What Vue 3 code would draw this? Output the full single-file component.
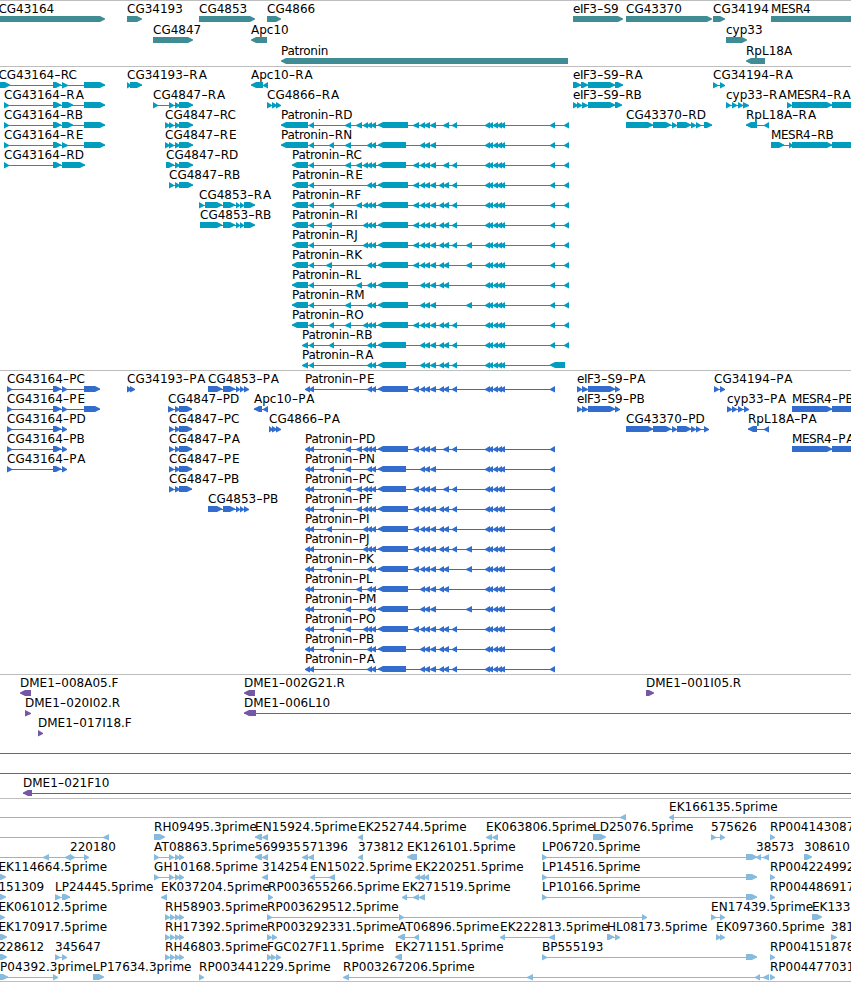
<script setup>
const WIDTH = 851;
const EDGE = 860;
const HEAD = 5;

// feature: [label, row, direction, exons, line start, line end]
function feature(name, row, dir, exons, from, to) {
  return { name, row, dir, exons, from, to };
}

const genes = [
  feature("CG43164", 0, 1, [[-1, 105]]),
  feature("CG34193", 0, 1, [[127, 142]]),
  feature("CG4853", 0, 1, [[199, 255]]),
  feature("CG4866", 0, 1, [[267, 281]]),
  feature("eIF3-S9", 0, 1, [[573, 623]]),
  feature("CG43370", 0, 1, [[626, 712]]),
  feature("CG34194", 0, 1, [[713, 725]]),
  feature("MESR4", 0, 1, [[771, EDGE]]),
  feature("CG4847", 1, 1, [[153, 193]]),
  feature("Apc10", 1, -1, [[251, 267]]),
  feature("cyp33", 1, 1, [[726, 747]]),
  feature("Patronin", 2, -1, [[281, 568]]),
  feature("RpL18A", 2, -1, [[746, 765]]),
];

// Patronin exons shared between the isoforms
const parts = {
  A: [[309, 314]],
  b: [[329, 334]],
  n: [[326, 332]],
  c: [[345, 351]],
  d: [[356, 362]],
  e: [[367, 372], [371, 376]],
  E: [[363, 368], [367, 372], [371, 376]],
  m: [[378, 406]],
  M: [[378, 408]],
  f: [[413, 419]],
  g: [[420, 425], [424, 430]],
  h: [[430, 436]],
  i: [[443, 449]],
  I: [[439, 444], [443, 449]],
  j: [[452, 457]],
  k: [[466, 472]],
  Q: [[485, 490], [488, 493], [493, 498], [497, 502], [500, 505]],
  y: [[550, 555]],
  z: [[564, 569]],
  Z: [[550, 565]],
};

function exonsOf(keys) {
  return keys.split("").flatMap((key) => parts[key]);
}

// isoform, first exon, exon keys, protein row
const isoforms = [
  ["D", [281, 308], "AcdEMfghijQy", 3],
  ["N", [281, 308], "AbcemghQy", 4],
  ["C", [292, 308], "AcdEmfghijQy", 5],
  ["E", [292, 308], "AeMfghIjQy", 0],
  ["F", [292, 308], "AbdEMfghIjQy", 6],
  ["I", [292, 308], "AnEMfghIjQy", 7],
  ["J", [292, 308], "AEMfghIjkQy", 8],
  ["K", [292, 308], "AneMfghIkQy", 9],
  ["L", [292, 308], "AdeMghIQy", 10],
  ["M", [292, 308], "AceMghkQy", 11],
  ["O", [292, 308], "AbcEMfghIjQy", 12],
  ["B", [302, 308], "AbemghIjQy", 13],
  ["A", [302, 308], "AemghIjQ", 14],
];

const patroninRna = isoforms.map(([id, first, keys], index) =>
  feature(`Patronin-R${id}`, index + 2, -1, [first, ...exonsOf(keys + (id === "A" ? "Z" : "z"))])
);
const patroninProtein = isoforms.map(([id, , keys, row]) =>
  feature(`Patronin-P${id}`, row, -1, [[305, 310], ...exonsOf(id === "A" ? keys + "y" : keys)])
);

const tail4847 = [[175, 180], [179, 193]];
const tail4853 = [[223, 235], [236, 240], [240, 244]];
const mid43370 = [[626, 653], [653, 671], [672, 677], [677, 691], [691, 696], [696, 701]];
const mesr4 = [[792, 832], [832, EDGE]];

const transcripts = [
  feature("CG43164-RC", 0, 1, [[-1, 10], [53, 61], [62, 68], [84, 105]]),
  feature("CG43164-RA", 1, 1, [[4, 9], [53, 61], [62, 73], [84, 105]]),
  feature("CG43164-RB", 2, 1, [[4, 9], [53, 61], [62, 73], [84, 105]]),
  feature("CG43164-RE", 3, 1, [[4, 9], [53, 61], [62, 68], [84, 105]]),
  feature("CG43164-RD", 4, 1, [[4, 9], [53, 61], [62, 85]]),
  feature("CG34193-RA", 0, 1, [[127, 131], [130, 142]]),
  feature("CG4847-RA", 1, 1, [[153, 158], [169, 174], ...tail4847]),
  feature("CG4847-RC", 2, 1, [[165, 170], [169, 174], ...tail4847]),
  feature("CG4847-RE", 3, 1, [[165, 170], [169, 174], ...tail4847]),
  feature("CG4847-RD", 4, 1, [[166, 174], ...tail4847]),
  feature("CG4847-RB", 5, 1, [[169, 174], ...tail4847]),
  feature("CG4853-RA", 6, 1, [[199, 204], [205, 222], ...tail4853, [244, 255]]),
  feature("CG4853-RB", 7, 1, [[200, 222], ...tail4853, [244, 255]]),
  feature("Apc10-RA", 0, -1, [[251, 263], [263, 268]]),
  feature("CG4866-RA", 1, 1, [[267, 272], [272, 277], [276, 281]]),
  ...patroninRna,
  feature("eIF3-S9-RA", 0, 1, [[573, 581], [581, 588], [588, 615], [615, 623]]),
  feature("eIF3-S9-RB", 1, 1, [[573, 578], [577, 582], [582, 588], [588, 615], [615, 622]]),
  feature("CG43370-RD", 2, 1, [...mid43370, [704, 712]]),
  feature("CG34194-RA", 0, 1, [[713, 718], [720, 725]]),
  feature("cyp33-RA", 1, 1, [[726, 731], [732, 737], [738, 743], [743, 749]]),
  feature("RpL18A-RA", 2, -1, [[746, 757], [764, 769]]),
  feature("MESR4-RA", 1, 1, [[787, 792], ...mesr4]),
  feature("MESR4-RB", 3, 1, [[771, 784], [789, 793], ...mesr4]),
];

const proteins = [
  feature("CG43164-PC", 0, 1, [[7, 12], [53, 61], [62, 67], [84, 100]]),
  feature("CG43164-PE", 1, 1, [[7, 12], [53, 61], [62, 67], [84, 100]]),
  feature("CG43164-PD", 2, 1, [[7, 12], [53, 61], [62, 67]]),
  feature("CG43164-PB", 3, 1, [[7, 12], [53, 61], [62, 67]]),
  feature("CG43164-PA", 4, 1, [[7, 12], [53, 61], [62, 67]]),
  feature("CG34193-PA", 0, 1, [[127, 132], [130, 135]]),
  feature("CG4853-PA", 0, 1, [[208, 222], ...tail4853, [244, 249]]),
  feature("CG4847-PD", 1, 1, [[168, 174], [175, 180], [179, 192]]),
  feature("CG4847-PC", 2, 1, [[169, 174], [175, 180], [179, 192]]),
  feature("CG4847-PA", 3, 1, [[169, 174], [175, 180], [179, 192]]),
  feature("CG4847-PE", 4, 1, [[169, 174], [175, 180], [179, 192]]),
  feature("CG4847-PB", 5, 1, [[169, 174], [175, 180], [179, 192]]),
  feature("CG4853-PB", 6, 1, [[208, 222], ...tail4853, [244, 249]]),
  feature("Apc10-PA", 1, -1, [[254, 262], [263, 268]]),
  feature("CG4866-PA", 2, 1, [[269, 273], [272, 277], [276, 281]]),
  ...patroninProtein,
  feature("eIF3-S9-PA", 0, 1, [[577, 582], [582, 588], [588, 615], [615, 620]]),
  feature("eIF3-S9-PB", 1, 1, [[577, 582], [582, 588], [588, 615], [615, 620]]),
  feature("CG43370-PD", 2, 1, [...mid43370, [704, 709]]),
  feature("CG34194-PA", 0, 1, [[714, 719], [720, 725]]),
  feature("cyp33-PA", 1, 1, [[727, 732], [732, 737], [738, 743], [744, 749]]),
  feature("RpL18A-PA", 2, -1, [[748, 757], [764, 769]]),
  feature("MESR4-PB", 1, 1, mesr4),
  feature("MESR4-PA", 3, 1, mesr4),
];

const bacs = [
  feature("DME1-008A05.F", 0, -1, [[20, 31]]),
  feature("DME1-020I02.R", 1, 1, [[25, 31]]),
  feature("DME1-017I18.F", 2, 1, [[38, 43]]),
  feature("DME1-002G21.R", 0, -1, [[244, 255]]),
  feature("DME1-006L10", 1, -1, [[244, 256]], 244, WIDTH),
  feature("DME1-001I05.R", 0, 1, [[646, 654]]),
  feature("", 3, 1, [], 0, WIDTH),
  feature("", 4, 1, [], 0, WIDTH),
  feature("DME1-021F10", 5, -1, [[23, 32]], 23, WIDTH),
];

const rhExons = [[165, 170], [170, 175], [175, 180], [179, 184]];
const atExons = [[154, 159], [169, 174], [175, 180], [179, 184]];
const longExons = [[542, 547], [746, 757]];

const ests = [
  feature("", 0, -1, [[620, 626]], 0, 626),
  feature("EK166135.5prime", 0, -1, [[669, 674]], 669, WIDTH),
  feature("", 1, -1, [[103, 109]], 0, 109),
  feature("RH09495.3prime", 1, 1, [[154, 165]]),
  feature("EN15924.5prime", 1, -1, [[255, 262], [262, 268]]),
  feature("EK252744.5prime", 1, -1, [[358, 363]]),
  feature("EK063806.5prime", 1, -1, [[486, 492], [492, 498]]),
  feature("LD25076.5prime", 1, 1, [[593, 606]]),
  feature("575626", 1, 1, [[711, 716], [720, 725]]),
  feature("RP004143087", 1, 1, [[770, 775]]),
  feature("", 2, -1, [[43, 49], [65, 71]], 0, 89),
  feature("220180", 2, 1, [[70, 75], [84, 89]]),
  feature("AT08863.5prime", 2, 1, atExons),
  feature("569935", 2, -1, [[255, 262], [262, 268]]),
  feature("571396", 2, -1, [[302, 308], [308, 314]]),
  feature("373812", 2, -1, [[358, 363]]),
  feature("EK126101.5prime", 2, -1, [[407, 417]]),
  feature("LP06720.5prime", 2, 1, longExons),
  feature("38573", 2, -1, [[756, 761], [763, 769]]),
  feature("308610", 2, 1, [[804, 812]]),
  feature("EK114664.5prime", 3, 1, [[-1, 6]]),
  feature("GH10168.5prime", 3, 1, atExons),
  feature("314254", 3, -1, [[262, 268]]),
  feature("EN15022.5prime", 3, -1, [[310, 315], [329, 335]]),
  feature("EK220251.5prime", 3, -1, [[415, 420], [419, 425], [424, 429]]),
  feature("LP14516.5prime", 3, 1, longExons),
  feature("RP004224992", 3, 1, [[770, 775]]),
  feature("151309", 4, 1, [[-1, 6]]),
  feature("LP24445.5prime", 4, 1, [[55, 61], [62, 70]]),
  feature("EK037204.5prime", 4, -1, [[161, 167]]),
  feature("RP003655266.5prime", 4, 1, [[268, 273]]),
  feature("EK271519.5prime", 4, -1, [[402, 407], [413, 419], [419, 425]]),
  feature("LP10166.5prime", 4, 1, longExons),
  feature("RP004486917", 4, 1, [[770, 775]]),
  feature("EK061012.5prime", 5, 1, [[-1, 5]]),
  feature("RH58903.5prime", 5, 1, rhExons),
  feature("RP003629512.5prime", 5, 1, [[267, 272], [399, 404], [642, 647]]),
  feature("EN17439.5prime", 5, 1, [[711, 716], [720, 725]]),
  feature("EK133", 5, 1, [[812, 822]]),
  feature("EK170917.5prime", 6, 1, [[-1, 7]]),
  feature("RH17392.5prime", 6, 1, rhExons),
  feature("RP003292331.5prime", 6, 1, [[267, 272], [272, 277]]),
  feature("AT06896.5prime", 6, -1, [[398, 405], [414, 419]]),
  feature("EK222813.5prime", 6, -1, [[500, 505], [549, 555]]),
  feature("HL08173.5prime", 6, 1, [[607, 614], [615, 620]]),
  feature("EK097360.5prime", 6, 1, [[716, 721], [720, 725]]),
  feature("381", 6, 1, [[831, 837]]),
  feature("228612", 7, 1, [[-1, 7]]),
  feature("345647", 7, 1, [[55, 60], [62, 67]]),
  feature("RH46803.5prime", 7, 1, rhExons),
  feature("FGC027F11.5prime", 7, 1, [[267, 272], [271, 276], [276, 281]]),
  feature("EK271151.5prime", 7, -1, [[395, 402]]),
  feature("BP555193", 7, 1, longExons),
  feature("RP004151878", 7, 1, [[770, 775]]),
  feature("P04392.3prime", 8, 1, [[0, 8], [53, 58]]),
  feature("LP17634.3prime", 8, 1, [[93, 104]]),
  feature("RP003441229.5prime", 8, 1, [[199, 204]]),
  feature("RP003267206.5prime", 8, -1, [[343, 349], [527, 533], [755, 760], [763, 769]]),
  feature("RP004477031", 8, 1, [[770, 775]]),
];

const tracks = [
  { id: "genes", height: 65, pitch: 21, features: genes },
  { id: "transcripts", height: 303, pitch: 20, features: transcripts },
  { id: "proteins", height: 303, pitch: 20, features: proteins },
  { id: "bacs", height: 123, pitch: 20, features: bacs },
  { id: "ests", height: 182, pitch: 20, features: ests },
];

const ruler = document.createElement("canvas").getContext("2d");
ruler.font = '12px "DejaVu Sans"';

const HYPHEN = 6.5;
const spacing = {
  Patronin: -2,
  MESR4: -1.8,
  eIF3: -1.5,
  RA: 1.5,
  PA: 1.5,
  RE: 1,
  PE: 1,
};

function extraWidth(part) {
  if (part.endsWith("prime")) {
    if (part.startsWith("AT")) return 2;
    return /^[LH]/.test(part) ? 0 : 1;
  }
  return spacing[part] ?? 0;
}

// label pieces with their own x and width, the hyphens are drawn wide
function labelParts(f) {
  const start = f.exons[0][0];
  let x = start < 0 ? start - 0.6 : start;
  return f.name.split(/(-)/).map((text) => {
    const width = text === "-" ? HYPHEN : ruler.measureText(text).width + extraWidth(text);
    const part = { text, x, width };
    x += width;
    return part;
  });
}

function lineFrom(f) {
  return f.from ?? f.exons[0][0];
}

function lineWidth(f) {
  const end = f.to ?? f.exons[f.exons.length - 1][1];
  return end - lineFrom(f);
}

function showLine(f) {
  return f.to !== undefined || f.exons.length > 1;
}

// block with a pointed end on the strand side
function exonPath([a, b], dir) {
  const head = Math.min(HEAD, b - a);
  // a short exon is all arrowhead and reaches one pixel lower
  if (b - a <= 6) {
    return dir > 0 ? `M${a} 0L${b} 3V4L${a} 6.6Z` : `M${b} 0L${a} 3V4L${b} 6.6Z`;
  }
  if (dir > 0) {
    return `M${a} 0H${b - head}L${b} 2.6V3.6L${b - head} 6H${a}Z`;
  }
  return `M${b} 0H${a + head}L${a} 2.6V3.6L${a + head} 6H${b}Z`;
}
</script>

<template>
  <main class="browser">
    <section v-for="track in tracks" :key="track.id" class="track" :class="track.id">
      <svg :width="WIDTH" :height="track.height">
        <g
          v-for="(f, index) in track.features"
          :key="index"
          :transform="`translate(0 ${15 + f.row * track.pitch})`"
        >
          <rect v-if="showLine(f)" class="glyph" :x="lineFrom(f)" y="3" :width="lineWidth(f)" height="1" />
          <path v-for="(exon, n) in f.exons" :key="n" class="glyph" :d="exonPath(exon, f.dir)" />
          <text v-if="f.name" y="-3"><tspan
            v-for="(part, n) in labelParts(f)"
            :key="n"
            :x="part.x"
            :textLength="part.width"
            :lengthAdjust="part.text === '-' ? 'spacingAndGlyphs' : 'spacing'"
          >{{ part.text }}</tspan></text>
        </g>
      </svg>
    </section>
  </main>
</template>

<style scoped>
.browser {
  width: 851px;
  height: 982px;
  box-sizing: border-box;
  overflow: hidden;
  background: #ffffff;
  border-bottom: 1px solid #bebebe;
}

.track {
  border-top: 1px solid #bebebe;
}

.track svg {
  display: block;
  overflow: hidden;
}

text {
  font-family: "DejaVu Sans", sans-serif;
  font-size: 12px;
  fill: #000000;
}

.genes .glyph {
  fill: #408c94;
}

.transcripts .glyph {
  fill: #009dbf;
}

.proteins .glyph {
  fill: #326ccc;
}

.bacs .glyph {
  fill: #7657a6;
}

.ests .glyph {
  fill: #87bbdd;
}
</style>

<style>
body {
  margin: 0;
  background: #ffffff;
}
</style>
